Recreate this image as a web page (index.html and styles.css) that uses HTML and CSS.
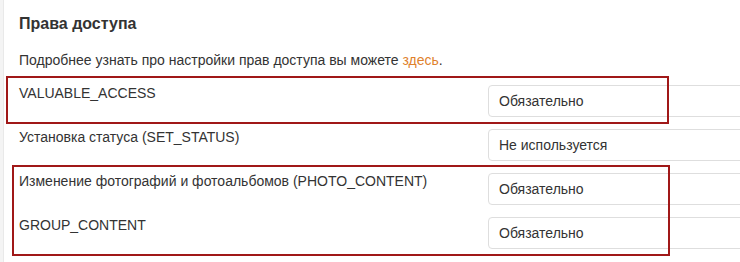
FILE: index.html
```html
<!DOCTYPE html>
<html lang="ru">
<head>
<meta charset="utf-8">
<title>Права доступа</title>
<link rel="stylesheet" href="styles.css">
</head>
<body>
<div class="card">
  <h2 class="title">Права доступа</h2>
  <p class="intro">Подробнее узнать про настройки прав доступа вы можете <a class="link" href="#">здесь</a>.</p>
  <div class="rows">
    <div class="row">
      <div class="label">VALUABLE_ACCESS</div>
      <div class="select">Обязательно</div>
    </div>
    <div class="row">
      <div class="label">Установка статуса (SET_STATUS)</div>
      <div class="select">Не используется</div>
    </div>
    <div class="row">
      <div class="label">Изменение фотографий и фотоальбомов (PHOTO_CONTENT)</div>
      <div class="select">Обязательно</div>
    </div>
    <div class="row">
      <div class="label">GROUP_CONTENT</div>
      <div class="select">Обязательно</div>
    </div>
  </div>
</div>
<div class="mark mark-one"></div>
<div class="mark mark-two"></div>
</body>
</html>
```

FILE: styles.css
```css
html, body {
  margin: 0;
  padding: 0;
}
body {
  background: #f4f4f4;
  font-family: "Liberation Sans", Arial, sans-serif;
  color: #333;
  width: 740px;
  height: 262px;
  overflow: hidden;
  position: relative;
}
.card {
  margin-left: 3px;
  border-left: 1px solid #e9e9e9;
  background: #fff;
  height: 262px;
  padding: 13px 0 0 15px;
  box-sizing: border-box;
  overflow: hidden;
}
.title {
  margin: 0;
  font-size: 16px;
  line-height: 22px;
  font-weight: bold;
  color: #333;
}
.intro {
  margin: 15px 0 0;
  font-size: 14px;
  line-height: 20px;
}
.link {
  color: #e0812c;
  text-decoration: none;
}
.rows {
  margin-top: 15px;
  display: flex;
  flex-direction: column;
  gap: 12px;
}
.row {
  display: flex;
  align-items: flex-start;
  height: 32px;
}
.label {
  width: 469px;
  flex: none;
  font-size: 14px;
  line-height: 20px;
  margin-top: -2px;
}
.select {
  flex: none;
  width: 300px;
  height: 32px;
  box-sizing: border-box;
  border: 1px solid #dedede;
  border-radius: 4px;
  padding-left: 10px;
  font-size: 14px;
  line-height: 30px;
  color: #333;
  background: #fff;
}
.mark {
  position: absolute;
  box-sizing: border-box;
  border: 2px solid #a01818;
}
.mark-one {
  left: 6px;
  top: 76px;
  width: 663px;
  height: 48px;
}
.mark-two {
  left: 12px;
  top: 165px;
  width: 658px;
  height: 91px;
}
```
